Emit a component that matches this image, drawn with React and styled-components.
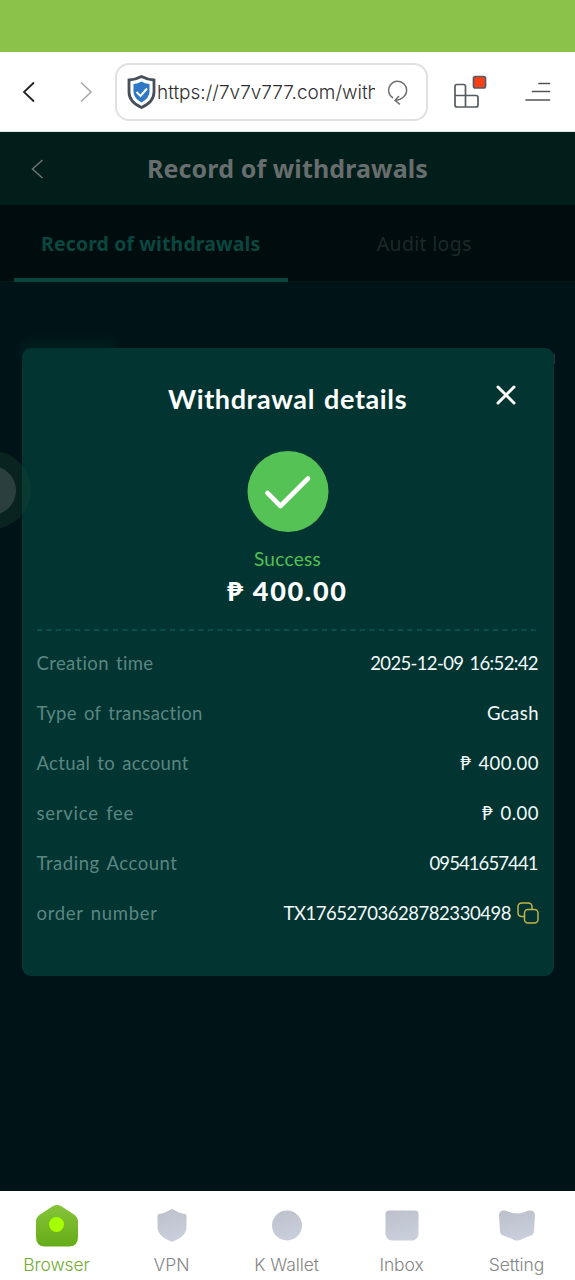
import React from 'react';
import styled, { createGlobalStyle } from 'styled-components';

const GlobalStyle = createGlobalStyle`
  * {
    box-sizing: border-box;
  }

  body {
    margin: 0;
    background: #001417;
    font-family: Lato, "Noto Sans", sans-serif;
  }
`;

const Screen = styled.div`
  display: flex;
  flex-direction: column;
  width: 575px;
  height: 1280px;
  overflow: hidden;
`;

const StatusBar = styled.div`
  height: 52px;
  flex: none;
  background: #8bc34a;
`;

const Toolbar = styled.div`
  display: flex;
  align-items: center;
  height: 80px;
  flex: none;
  padding: 0 23px 0 22px;
  background: #fff;
  border-bottom: 1px solid #dfe6e5;
`;

const ToolbarIcon = styled.svg`
  flex: none;
  display: block;
  margin-left: ${props => props.$gap || 0}px;
`;

const AddressBar = styled.div`
  display: flex;
  align-items: center;
  width: 313px;
  height: 58px;
  margin-left: 22px;
  padding: 0 17px 0 10px;
  border: 2px solid #e0e1e1;
  border-radius: 14px;
`;

const Url = styled.div`
  width: 219px;
  padding: 2px 0 0 1px;
  overflow: hidden;
  white-space: nowrap;
  font-family: Inter, sans-serif;
  font-size: 19px;
  font-weight: 300;
  line-height: 28px;
  color: #2f2f2f;
`;

const Page = styled.div`
  position: relative;
  flex: 1;
  background: #001417;
`;

const PageHeader = styled.div`
  display: grid;
  grid-template-columns: 75px 1fr 75px;
  align-items: center;
  height: 73px;
  background: #021e1b;
`;

const BackIcon = styled.svg`
  display: block;
  margin-left: 30px;
`;

const PageTitle = styled.h1`
  margin: 0 0 2px;
  text-align: center;
  white-space: nowrap;
  font-family: "Noto Sans", sans-serif;
  font-size: 25px;
  font-weight: 700;
  letter-spacing: 0.12px;
  color: #686d6d;
`;

const Tabs = styled.div`
  display: flex;
  height: 77px;
  padding: 0 14px;
  background: #000c0d;
  border-bottom: 1px solid #02191a;
`;

const Tab = styled.div`
  flex: 1;
  height: 77px;
  line-height: 77px;
  text-align: center;
  white-space: nowrap;
  font-family: "Noto Sans", sans-serif;
  font-size: 19.5px;
  font-weight: ${props => (props.$active ? 700 : 400)};
  letter-spacing: ${props => (props.$active ? 0.1 : 0.3)}px;
  color: ${props => (props.$active ? '#09473f' : '#1c2929')};
  border-bottom: 4px solid ${props => (props.$active ? '#0a453d' : 'transparent')};
`;

const CardGlow = styled.div`
  position: absolute;
  top: 208px;
  left: 22px;
  width: 93px;
  height: 20px;
  background: #021d1c;
  filter: blur(4px);
`;

const CardEdge = styled.div`
  position: absolute;
  top: 222px;
  right: 20px;
  width: 8px;
  height: 10px;
  background: #293637;
`;

const Overlay = styled.div`
  position: absolute;
  inset: 0;
  display: flex;
  align-items: center;
  justify-content: center;
`;

const Modal = styled.div`
  display: flex;
  flex-direction: column;
  align-items: center;
  width: 532px;
  height: 628px;
  padding: 0 15px;
  border-radius: 9px;
  background: #023432;
`;

const ModalHeader = styled.div`
  display: grid;
  grid-template-columns: 50px 1fr 50px;
  align-items: center;
  width: 100%;
  height: 102px;
`;

const ModalTitle = styled.h2`
  grid-column: 2;
  margin: 0;
  text-align: center;
  white-space: nowrap;
  font-size: 27px;
  font-weight: 700;
  letter-spacing: 0.6px;
  word-spacing: 2px;
  color: #fff;
`;

const CloseIcon = styled.svg`
  display: block;
  margin: 0 0 7px 5px;
`;

const StatusText = styled.div`
  margin-top: 14px;
  line-height: 26px;
  font-size: 19px;
  letter-spacing: 0.3px;
  color: #52c152;
`;

const Amount = styled.div`
  line-height: 38px;
  white-space: nowrap;
  font-size: 27px;
  font-weight: 900;
  letter-spacing: 1.7px;
  color: #fff;
`;

const Divider = styled.svg`
  display: block;
  margin: 19px 0 7px;
`;

const Row = styled.div`
  display: flex;
  align-items: center;
  justify-content: space-between;
  width: 100%;
  height: 50.1px;
  white-space: nowrap;
  font-size: 18.5px;
  word-spacing: 2px;
`;

const Label = styled.span`
  letter-spacing: ${props => props.$spacing}px;
  color: #5b8681;
`;

const Value = styled.span`
  margin-left: auto;
  margin-right: ${props => -props.$spacing}px;
  letter-spacing: ${props => props.$spacing}px;
  color: #f2fafa;
`;

const CopyIcon = styled.svg`
  margin-left: 5px;
`;

const FloatButton = styled.svg`
  position: absolute;
  top: 318px;
  left: 0;
`;

const BottomNav = styled.div`
  display: grid;
  grid-template-columns: repeat(5, 1fr);
  height: 89px;
  flex: none;
  background: #fff;
`;

const NavItem = styled.div`
  display: flex;
  flex-direction: column;
  align-items: center;
  padding: 12px 2px 0 0;
  white-space: nowrap;
  font-family: Inter, sans-serif;
  font-size: 17.5px;
  font-weight: 300;
  line-height: 22px;
  letter-spacing: -0.1px;
  color: ${props => (props.$active ? '#73ad32' : '#858585')};

  svg {
    margin-bottom: 7px;
  }
`;

const rows = [
  { label: 'Creation time', value: '2025-12-09 16:52:42', labelSpacing: 0.37, valueSpacing: -0.65 },
  { label: 'Type of transaction', value: 'Gcash', labelSpacing: 0.35, valueSpacing: 0.45 },
  { label: 'Actual to account', value: '₱ 400.00', labelSpacing: 0.35, valueSpacing: 0.4 },
  { label: 'service fee', value: '₱ 0.00', labelSpacing: 0.75, valueSpacing: 0.5 },
  { label: 'Trading Account', value: '09541657441', labelSpacing: 0.55, valueSpacing: -0.9 },
  { label: 'order number', value: 'TX17652703628782330498', labelSpacing: 0.7, valueSpacing: -0.45, copy: true },
];

const navItems = [
  {
    label: 'Browser',
    shape: (
      <>
        <path d="M18 3Q22 1 26 3L39 11.500Q43 14.500 43 18.500V34Q43 43.500 34 43.500H10Q1 43.500 1 34V18.500Q1 14.500 5 11.500Z" fill="url(#green)" />
        <circle cx="21.500" cy="21.500" r="7.500" fill="#a6ff00" />
      </>
    ),
  },
  {
    label: 'VPN',
    shape: <path d="M22 6Q23 6 26 8Q30 10.500 35 11Q36.500 11 36.500 13V24Q36.500 31 29 35.500L24 38Q22 39 20 38L15 35.500Q7.500 31 7.500 24V13Q7.500 11 9 11Q14 10.500 18 8Q21 6 22 6Z" fill="url(#grey)" />,
  },
  {
    label: 'K Wallet',
    shape: <circle cx="22" cy="22.500" r="15" fill="url(#grey)" />,
  },
  {
    label: 'Inbox',
    shape: <path d="M9 7.500H35Q38.500 7.500 38.500 11V31Q38 36 33 37.500H11Q6 36 5.500 31V11Q5.500 7.500 9 7.500Z" fill="url(#grey)" />,
  },
  {
    label: 'Setting',
    shape: <path d="M8 7.500Q10 7 13 8.500Q22 12.500 31 8.500Q34 7 36 7.500Q40 8 40 12L39 28Q39 31 36 32.500Q29 35 25 37Q22 38 19 37Q15 35 8 32.500Q5 31 5 28L4 12Q4 8 8 7.500Z" fill="url(#grey)" />,
  },
];

function BrowserToolbar() {
  return (
    <Toolbar>
      <ToolbarIcon width="14" height="22" viewBox="0 0 14 22" fill="none" stroke="#222" strokeWidth="1.8">
        <path d="M12 1.500L2 11L12 20.500" />
      </ToolbarIcon>
      <ToolbarIcon $gap={43} width="14" height="22" viewBox="0 0 14 22" fill="none" stroke="#aaa" strokeWidth="1.6">
        <path d="M2 1.500L12 11L2 20.500" />
      </ToolbarIcon>
      <AddressBar>
        <ToolbarIcon width="29" height="34" viewBox="0 0 29 34">
          <path d="M14.500 1.500Q20 4.500 27 5V17Q27 27 14.500 32.500Q2 27 2 17V5Q9 4.500 14.500 1.500Z" fill="#fff" stroke="#47505a" strokeWidth="2.800" />
          <path d="M14.500 6.500Q18 8.500 22.500 9V17Q22 23.500 14.500 27.500Q7 23.500 6.500 17V9Q11 8.500 14.500 6.500Z" fill="#2e78c5" />
          <path d="M9.500 17L13.500 21L20 13.500" fill="none" stroke="#fff" strokeWidth="2" />
        </ToolbarIcon>
        <Url>https://7v7v777.com/with</Url>
        <ToolbarIcon $gap={13} width="20" height="26" viewBox="0 0 20 26" fill="none" stroke="#707070" strokeWidth="1.500">
          <path d="M5 19A9 9 0 1 1 15 18.500Q12.500 21 7.500 21.500M11 17L7 21.500L12 25.300" />
        </ToolbarIcon>
      </AddressBar>
      <ToolbarIcon $gap={25} width="34" height="34" viewBox="0 0 34 34" stroke="#555b60" strokeWidth="1.700" fill="none">
        <path d="M4 9.500H10.500Q12.500 9.500 12.500 11.500V20.500H23Q25 20.500 25 22.500V30Q25 32 23 32H4Q2 32 2 30V11.500Q2 9.500 4 9.500ZM2 20.500H12.500V32" />
        <rect x="20.500" y="1.500" width="12" height="11.500" rx="2" fill="#f74016" />
      </ToolbarIcon>
      <ToolbarIcon $gap={38} width="26" height="20" viewBox="0 0 26 20" stroke="#555" strokeWidth="1.700" strokeLinecap="round">
        <path d="M14 1.500H24.500M7.500 9.500H24.500M1 18H24.500" />
      </ToolbarIcon>
    </Toolbar>
  );
}

function WithdrawalDetails() {
  return (
    <Modal>
      <ModalHeader>
        <ModalTitle>Withdrawal details</ModalTitle>
        <CloseIcon width="24" height="24" viewBox="0 0 24 24" stroke="#fff" strokeWidth="3" strokeLinecap="round">
          <path d="M4 4L20 20M20 4L4 20" />
        </CloseIcon>
      </ModalHeader>
      <svg width="82" height="82" viewBox="0 0 82 82">
        <circle cx="41" cy="41.500" r="40.500" fill="#54c254" />
        <path d="M20.500 43L33.500 56L61 28.500" fill="none" stroke="#fff" strokeWidth="4.600" strokeLinecap="round" strokeLinejoin="round" />
      </svg>
      <StatusText>Success</StatusText>
      <Amount>₱ 400.00</Amount>
      <Divider width="502" height="2" viewBox="0 0 502 2">
        <path d="M0 1H502" stroke="#0b5a52" strokeWidth="1.500" strokeDasharray="5 4.500" />
      </Divider>
      {rows.map(row => (
        <Row key={row.label}>
          <Label $spacing={row.labelSpacing}>{row.label}</Label>
          <Value $spacing={row.valueSpacing}>{row.value}</Value>
          {row.copy && (
            <CopyIcon width="22" height="22" viewBox="0 0 22 22" fill="none" stroke="#c2b34a" strokeWidth="1.500">
              <path d="M7 14.500H5Q1 14.500 1 10.500V5Q1 1 5 1H11Q15 1 15 5V7.500" />
              <rect x="7.500" y="7.500" width="13.500" height="13.500" rx="3.500" />
            </CopyIcon>
          )}
        </Row>
      ))}
    </Modal>
  );
}

function App() {
  return (
    <Screen>
      <GlobalStyle />
      <StatusBar />
      <BrowserToolbar />
      <Page>
        <PageHeader>
          <BackIcon width="14" height="20" viewBox="0 0 14 20" fill="none" stroke="#6c7575" strokeWidth="1.500">
            <path d="M12.500 1L2.500 10L12.500 19" />
          </BackIcon>
          <PageTitle>Record of withdrawals</PageTitle>
        </PageHeader>
        <Tabs>
          <Tab $active>Record of withdrawals</Tab>
          <Tab>Audit logs</Tab>
        </Tabs>
        <CardGlow />
        <CardEdge />
        <Overlay>
          <WithdrawalDetails />
        </Overlay>
        <FloatButton width="32" height="80" viewBox="0 0 32 80">
          <circle cx="-8" cy="40" r="39" fill="#1c4a34" fillOpacity="0.300" />
          <circle cx="-8.500" cy="40.500" r="24.500" fill="#2b3f3f" />
        </FloatButton>
      </Page>
      <BottomNav>
        {navItems.map((item, i) => (
          <NavItem key={item.label} $active={i === 0}>
            <svg width="44" height="44" viewBox="0 0 44 44">
              <defs>
                <linearGradient id="green" x1="0" y1="0" x2="0" y2="1">
                  <stop offset="0" stopColor="#86c43a" />
                  <stop offset="1" stopColor="#66ac18" />
                </linearGradient>
                <linearGradient id="grey" x1="0" y1="0" x2="0.3" y2="1">
                  <stop offset="0" stopColor="#bbc0cb" />
                  <stop offset="1" stopColor="#c9cedb" />
                </linearGradient>
              </defs>
              {item.shape}
            </svg>
            {item.label}
          </NavItem>
        ))}
      </BottomNav>
    </Screen>
  );
}

export default App;
